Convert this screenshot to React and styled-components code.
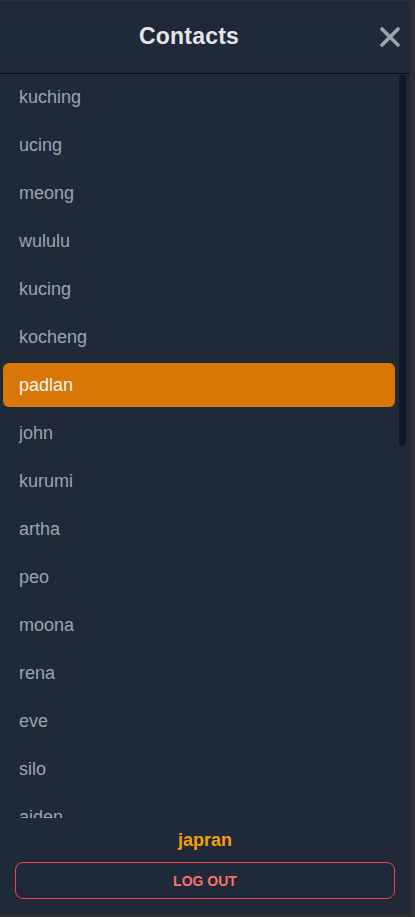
import React, { useState } from "react";
import styled, { createGlobalStyle } from "styled-components";

const GlobalStyle = createGlobalStyle`
  html, body {
    margin: 0;
    padding: 0;
    height: 100%;
    background: #2e2f33;
    font-family: "Liberation Sans", Arial, sans-serif;
  }
  #root {
    height: 100%;
  }
`;

const Panel = styled.aside`
  box-sizing: border-box;
  width: 410px;
  height: 100vh;
  display: flex;
  flex-direction: column;
  background: #1f2937;
  border-top: 1px solid #2e2f33;
  border-bottom: 2px solid #2e2f33;
`;

const Header = styled.header`
  height: 72px;
  display: flex;
  align-items: center;
  padding-right: 8px;
  border-bottom: 1px solid #0b0f17;
  flex-shrink: 0;
`;

const Title = styled.h2`
  flex: 1;
  margin: 0 0 1px;
  text-align: center;
  font-size: 23px;
  font-weight: 700;
  color: #e2e5ea;
  letter-spacing: 0.2px;
`;

const CloseButton = styled.button`
  width: 24px;
  height: 24px;
  padding: 0;
  border: 0;
  background: none;
  cursor: pointer;
  display: flex;
  align-items: center;
  justify-content: center;
`;

const ListArea = styled.div`
  position: relative;
  flex: 1;
  min-height: 0;
`;

const List = styled.ul`
  height: 100%;
  box-sizing: border-box;
  margin: 0;
  padding: 1px 15px 0 3px;
  list-style: none;
  overflow-y: scroll;
  scrollbar-width: none;

  &::-webkit-scrollbar {
    display: none;
  }
`;

const ScrollThumb = styled.div`
  position: absolute;
  top: 1px;
  right: 4px;
  width: 7px;
  height: 371px;
  border-radius: 4px;
  background: #111827;
  pointer-events: none;
`;

const Item = styled.li`
  height: 44px;
  margin: 0 0 4px;
  padding: 0 16px;
  display: flex;
  align-items: center;
  border-radius: 6px;
  font-size: 18px;
  cursor: pointer;
  color: ${(p) => (p.$active ? "#f3f4f6" : "#9ca3af")};
  background: ${(p) => (p.$active ? "#d97706" : "transparent")};
`;

const Footer = styled.footer`
  flex-shrink: 0;
  padding: 12px 15px 16px;
  display: flex;
  flex-direction: column;
  align-items: center;
  gap: 12px;
`;

const UserName = styled.div`
  font-size: 18px;
  line-height: 20px;
  font-weight: 700;
  color: #f59e0b;
`;

const LogoutButton = styled.button`
  width: 100%;
  height: 37px;
  border: 1px solid #ef4444;
  border-radius: 8px;
  background: transparent;
  color: #f87171;
  font-family: "Liberation Sans", Arial, sans-serif;
  font-size: 14px;
  font-weight: 700;
  cursor: pointer;
`;

const contacts = [
  "kuching", "ucing", "meong", "wululu", "kucing", "kocheng", "padlan",
  "john", "kurumi", "artha", "peo", "moona", "rena", "eve", "silo", "aiden",
  "bima", "citra", "dodo", "elang", "fajar", "gita", "hana", "indra",
  "joko", "kiki", "lala", "mimi", "nana", "oki", "putri",
];

export default function App() {
  const [active, setActive] = useState("padlan");
  return (
    <>
      <GlobalStyle />
      <Panel>
        <Header>
          <Title>Contacts</Title>
          <CloseButton aria-label="close">
            <svg width="22" height="22" viewBox="0 0 22 22">
              <path
                d="M3 3 L19 19 M19 3 L3 19"
                stroke="#9ca3af"
                strokeWidth="3.6"
                strokeLinecap="round"
              />
            </svg>
          </CloseButton>
        </Header>
        <ListArea>
          <List>
            {contacts.map((name) => (
              <Item
                key={name}
                $active={name === active}
                onClick={() => setActive(name)}
              >
                {name}
              </Item>
            ))}
          </List>
          <ScrollThumb />
        </ListArea>
        <Footer>
          <UserName>japran</UserName>
          <LogoutButton>LOG OUT</LogoutButton>
        </Footer>
      </Panel>
    </>
  );
}
